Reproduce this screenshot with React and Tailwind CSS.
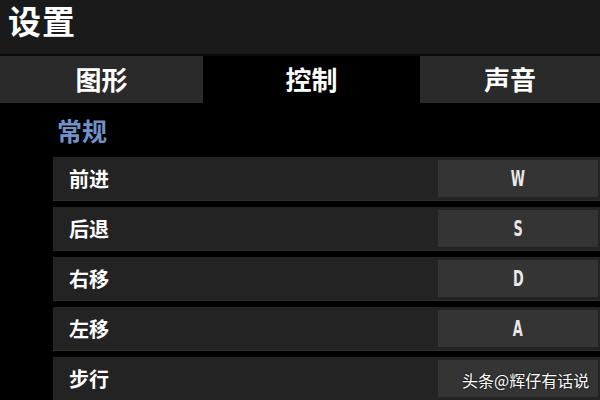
import React from 'react';

const tabs = [
  { label: '图形', active: false, width: 'w-[203px]' },
  { label: '控制', active: true, width: 'w-[217px]' },
  { label: '声音', active: false, width: 'flex-1' },
];

const bindings = [
  { action: '前进', key: 'W' },
  { action: '后退', key: 'S' },
  { action: '右移', key: 'D' },
  { action: '左移', key: 'A' },
  { action: '步行', key: '' },
];

const font = { fontFamily: '"Noto Sans CJK SC", "Noto Sans", sans-serif' };

export default function App() {
  return (
    <div className="relative w-[600px] h-[400px] overflow-hidden bg-black text-white" style={font}>
      {/* Header */}
      <div className="h-[54px] bg-[#1a1a1a] px-2">
        <h1 className="text-[33px] font-bold leading-[40px] tracking-[1px]">设置</h1>
      </div>
      <div className="h-[2px] bg-[#0c0c0c]" />

      {/* Tabs */}
      <div className="flex h-[47px]">
        {tabs.map(tab => (
          <div
            key={tab.label}
            className={`${tab.width} flex items-center justify-center text-[26px] font-bold pb-[2px] ${
              tab.active ? 'bg-black' : 'bg-[#2a2a2a]'
            }`}
          >
            {tab.label}
          </div>
        ))}
      </div>

      {/* Section */}
      <div className="pl-[53px]">
        <h2 className="text-[25px] font-bold text-[#6f93c8] leading-none pl-[4px] mt-[15px] mb-[14px]">常规</h2>
        <div className="flex flex-col gap-[6px]">
          {bindings.map(b => (
            <div key={b.action} className="h-[44px] bg-[#232323] border-b border-[#2e2e2e] flex items-center">
              <span className="flex-1 pl-[16px] text-[20px] font-bold">{b.action}</span>
              <div className="w-[160px] h-[37px] mr-[2px] bg-[#343434] flex items-center justify-center">
                <span
                  className="text-[22px] font-bold text-[#e8e8e8] scale-x-[0.65] leading-none"
                  style={{ fontFamily: '"DejaVu Sans Condensed", "Liberation Sans", sans-serif' }}
                >
                  {b.key}
                </span>
              </div>
            </div>
          ))}
        </div>
      </div>

      {/* Watermark */}
      <div className="absolute left-[462px] top-[368px] text-[16px] text-white [text-shadow:0_0_2px_#000]">
        头条@辉仔有话说
      </div>
    </div>
  );
}
